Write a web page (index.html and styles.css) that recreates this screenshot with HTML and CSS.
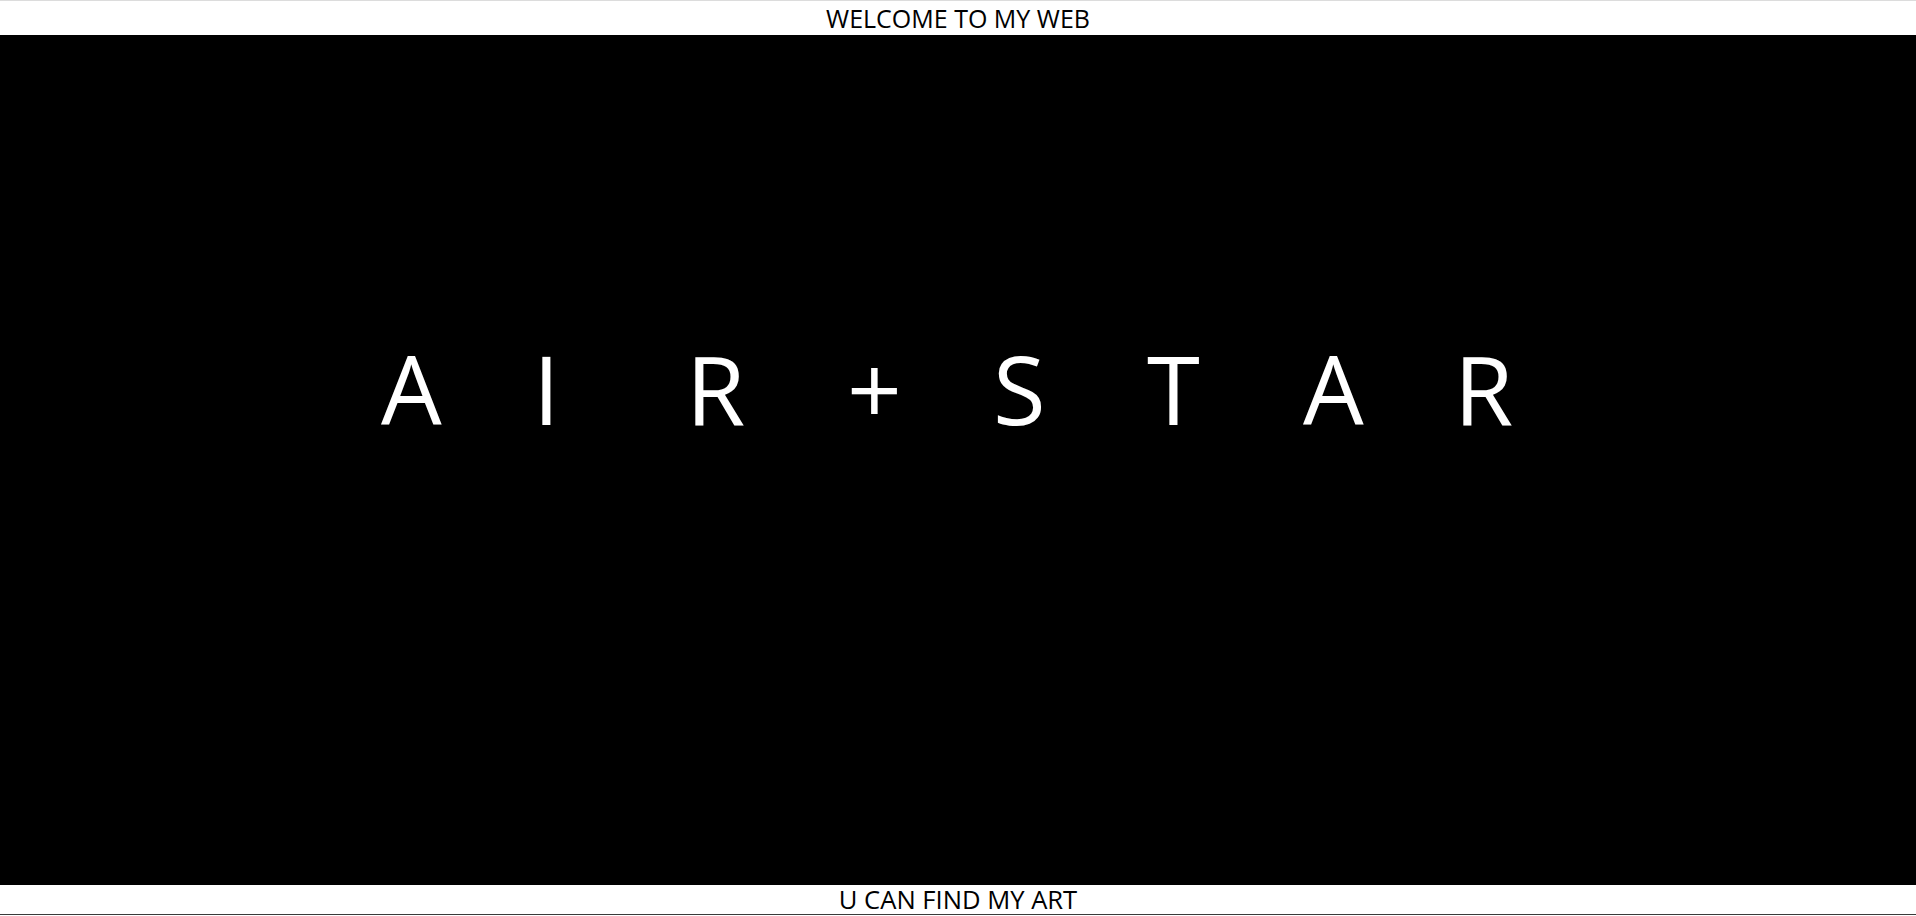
FILE: index.html
```html
<!DOCTYPE html>
<html lang="en">
<head>
<meta charset="utf-8">
<title>AIR + STAR</title>
<link rel="stylesheet" href="styles.css">
</head>
<body>
<header class="top-bar">WELCOME TO MY WEB</header>
<main class="hero">
  <h1 class="title">
    <span>A</span><span>I</span><span>R</span><span>+</span><span>S</span><span>T</span><span>A</span><span>R</span>
  </h1>
</main>
<footer class="bottom-bar">U CAN FIND MY ART</footer>
</body>
</html>
```
FILE: styles.css
```css
html, body {
  margin: 0;
  padding: 0;
  background: #ffffff;
}
body {
  font-family: "Open Sans", "Noto Sans", "Liberation Sans", sans-serif;
  color: #000;
  height: 916px;
  overflow: hidden;
}
.top-bar {
  box-sizing: border-box;
  height: 35px;
  border-top: 1px solid #dcdcdc;
  text-align: center;
  font-size: 25px;
  line-height: 34px;
}
.hero {
  background: #000;
  height: 850px;
  box-sizing: border-box;
  padding-top: 305px;
}
.title {
  margin: 0;
  color: #fff;
  font-weight: 400;
  font-size: 96px;
  line-height: 96px;
  display: grid;
  grid-template-columns: 152px 153px 161px 146px 154px 156px 151px 60px;
  justify-content: start;
  padding-left: 381px;
}
.title span {
  display: block;
}
.bottom-bar {
  box-sizing: border-box;
  height: 30px;
  border-bottom: 1px solid #3a3a3a;
  text-align: center;
  font-size: 25.6px;
  line-height: 29px;
}
```
